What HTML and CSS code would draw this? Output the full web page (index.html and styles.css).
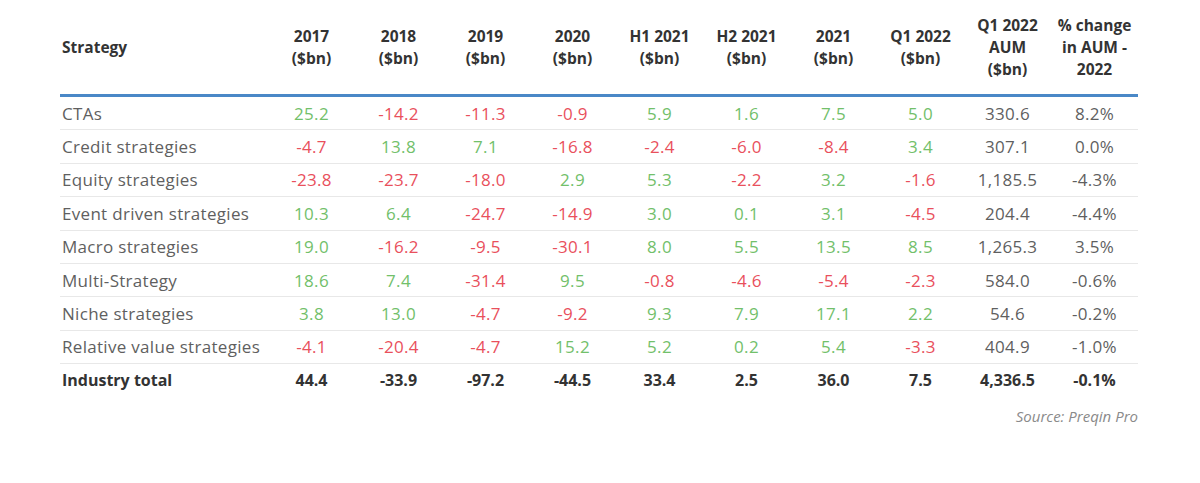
FILE: index.html
```html
<!DOCTYPE html>
<html>
<head>
<meta charset="utf-8">
<link rel="stylesheet" href="styles.css">
</head>
<body>
<div class="wrap">
<table class="tbl">
<colgroup>
<col class="c-name">
<col span="10" class="c-num">
</colgroup>
<thead>
<tr>
<th class="name">Strategy</th>
<th>2017<br>($bn)</th>
<th>2018<br>($bn)</th>
<th>2019<br>($bn)</th>
<th>2020<br>($bn)</th>
<th>H1 2021<br>($bn)</th>
<th>H2 2021<br>($bn)</th>
<th>2021<br>($bn)</th>
<th>Q1 2022<br>($bn)</th>
<th>Q1 2022<br>AUM<br>($bn)</th>
<th>% change<br>in AUM -<br>2022</th>
</tr>
</thead>
<tbody>
<tr><td class="name">CTAs</td><td class="g">25.2</td><td class="r">-14.2</td><td class="r">-11.3</td><td class="r">-0.9</td><td class="g">5.9</td><td class="g">1.6</td><td class="g">7.5</td><td class="g">5.0</td><td>330.6</td><td>8.2%</td></tr>
<tr><td class="name">Credit strategies</td><td class="r">-4.7</td><td class="g">13.8</td><td class="g">7.1</td><td class="r">-16.8</td><td class="r">-2.4</td><td class="r">-6.0</td><td class="r">-8.4</td><td class="g">3.4</td><td>307.1</td><td>0.0%</td></tr>
<tr><td class="name">Equity strategies</td><td class="r">-23.8</td><td class="r">-23.7</td><td class="r">-18.0</td><td class="g">2.9</td><td class="g">5.3</td><td class="r">-2.2</td><td class="g">3.2</td><td class="r">-1.6</td><td>1,185.5</td><td>-4.3%</td></tr>
<tr><td class="name">Event driven strategies</td><td class="g">10.3</td><td class="g">6.4</td><td class="r">-24.7</td><td class="r">-14.9</td><td class="g">3.0</td><td class="g">0.1</td><td class="g">3.1</td><td class="r">-4.5</td><td>204.4</td><td>-4.4%</td></tr>
<tr><td class="name">Macro strategies</td><td class="g">19.0</td><td class="r">-16.2</td><td class="r">-9.5</td><td class="r">-30.1</td><td class="g">8.0</td><td class="g">5.5</td><td class="g">13.5</td><td class="g">8.5</td><td>1,265.3</td><td>3.5%</td></tr>
<tr><td class="name">Multi-Strategy</td><td class="g">18.6</td><td class="g">7.4</td><td class="r">-31.4</td><td class="g">9.5</td><td class="r">-0.8</td><td class="r">-4.6</td><td class="r">-5.4</td><td class="r">-2.3</td><td>584.0</td><td>-0.6%</td></tr>
<tr><td class="name">Niche strategies</td><td class="g">3.8</td><td class="g">13.0</td><td class="r">-4.7</td><td class="r">-9.2</td><td class="g">9.3</td><td class="g">7.9</td><td class="g">17.1</td><td class="g">2.2</td><td>54.6</td><td>-0.2%</td></tr>
<tr><td class="name">Relative value strategies</td><td class="r">-4.1</td><td class="r">-20.4</td><td class="r">-4.7</td><td class="g">15.2</td><td class="g">5.2</td><td class="g">0.2</td><td class="g">5.4</td><td class="r">-3.3</td><td>404.9</td><td>-1.0%</td></tr>
<tr class="total"><td class="name">Industry total</td><td>44.4</td><td>-33.9</td><td>-97.2</td><td>-44.5</td><td>33.4</td><td>2.5</td><td>36.0</td><td>7.5</td><td>4,336.5</td><td>-0.1%</td></tr>
</tbody>
</table>
<p class="source">Source: Preqin Pro</p>
</div>
</body>
</html>
```
FILE: styles.css
```css
html, body {
  margin: 0;
  padding: 0;
  background: #ffffff;
}
body {
  font-family: "Open Sans", Roboto, "Liberation Sans", sans-serif;
}
.wrap {
  width: 1078px;
  padding: 6px 0 0 60px;
}
.tbl {
  width: 1078px;
  border-collapse: collapse;
  table-layout: fixed;
}
.c-name { width: 208px; }
.c-num { width: 87px; }
.tbl th {
  font-size: 15.5px;
  font-weight: 700;
  color: #333333;
  line-height: 22px;
  text-align: center;
  vertical-align: middle;
  padding: 8px 0 14px 0;
  border-bottom: 3px solid #4a88c7;
}
.tbl th.name,
.tbl td.name {
  text-align: left;
  padding-left: 2px;
}
.tbl td {
  font-size: 17px;
  letter-spacing: 0.3px;
  color: #5f5f5f;
  text-align: center;
  height: 32.4px;
  padding: 0;
  border-bottom: 1px solid #e8e8e8;
}
.tbl td.g { color: #72c06a; }
.tbl td.r { color: #e9505c; }
.tbl tr.total td {
  font-size: 16px;
  letter-spacing: 0;
  font-weight: 700;
  color: #333333;
  border-bottom: none;
}
.source {
  margin: 9px 0 0 0;
  text-align: right;
  font-size: 15px;
  font-style: italic;
  color: #8a8a8a;
}
```
